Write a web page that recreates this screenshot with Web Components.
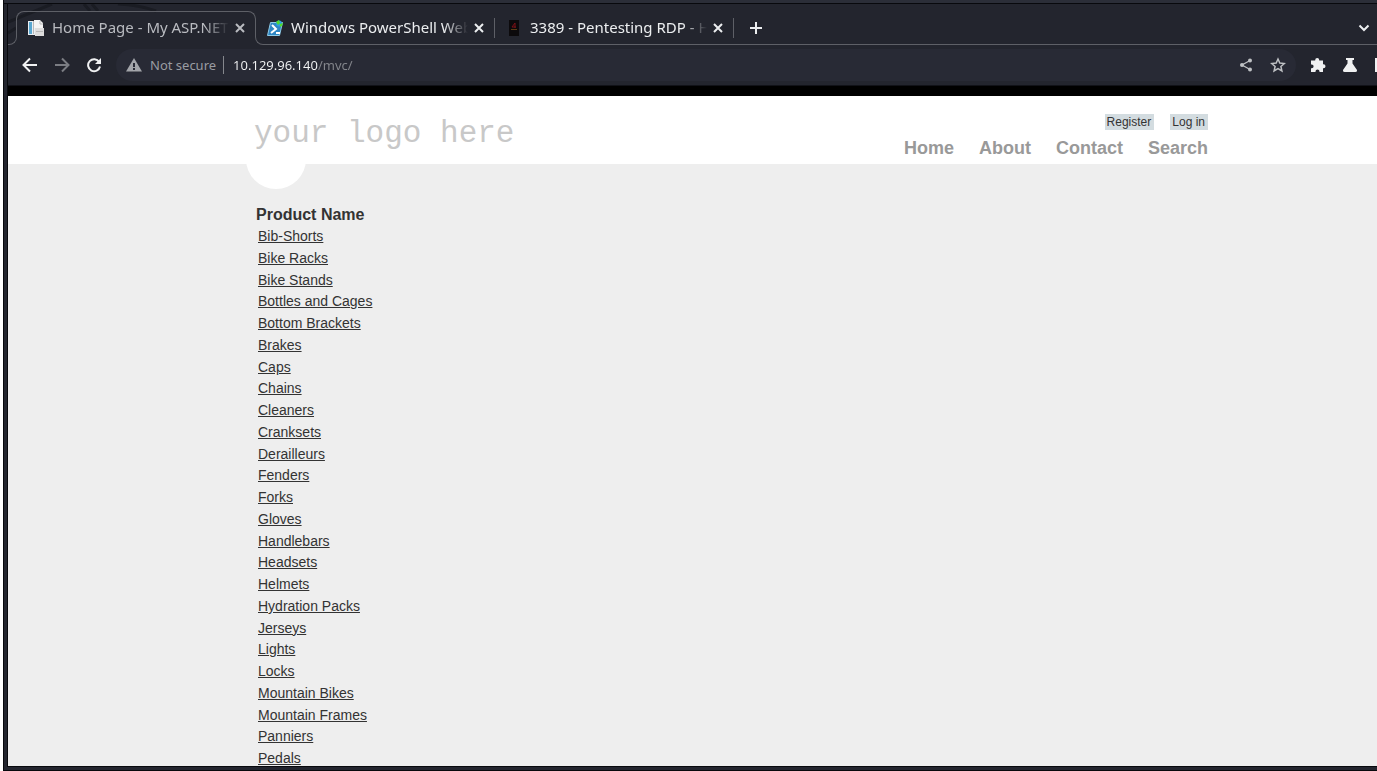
<!DOCTYPE html>
<html lang="en">
<head>
<meta charset="utf-8">
<title>Home Page - My ASP.NET MVC Application</title>
<style>
html, body { margin: 0; height: 100%; overflow: hidden; background: #fff; }
body { font-family: "Liberation Sans", sans-serif; }
</style>
</head>
<body>
<browser-window>
  <tab-strip slot="tabs">
    <browser-tab active label="Home Page - My ASP.NET">
      <svg slot="icon" viewBox="0 0 16 16" width="16" height="16"><path fill="#e9eef2" d="M0 1h8l2 2v12H0z"/><path fill="#58a6cf" d="M1 2h3v12H1z"/><path fill="#f4f4f4" d="M6 0h6l3 3v5H6z"/><path fill="#dcdcdc" d="M7 8h9v8H7z"/><path stroke="#b7b7b7" d="M5.500 1v13M12 1v3h3M8 11.500h7" fill="none"/></svg>
    </browser-tab>
    <browser-tab follows label="Windows PowerShell Web">
      <svg slot="icon" viewBox="0 0 16 16" width="16" height="16"><path fill="#2e86c4" stroke="#8ecbe8" d="M3.500 2.500h12l-3 13H.5z"/><path d="M5 5l4 4-5 4M9 13h4" stroke="#fff" stroke-width="2" fill="none"/><circle cx="12" cy="3.500" r="3" fill="#2f9fe0"/><path fill="#4fdc2b" d="M9 2l3-2 1 3-2 2zM13 4l3-1-1 3-2 1z"/></svg>
    </browser-tab>
    <browser-tab label="3389 - Pentesting RDP - H">
      <svg slot="icon" viewBox="0 0 16 16" width="16" height="16"><path fill="#0c0a0c" d="M3 0h10v16H3z"/><path d="M9 3L6 7h4M9 3v5" stroke="#7c1016" fill="none"/><path d="M5 9.500h6" stroke="#5c3b15"/></svg>
    </browser-tab>
  </tab-strip>
  <address-bar slot="toolbar"></address-bar>
  <site-page slot="page"></site-page>
</browser-window>
<script>
class ShadowElement extends HTMLElement {
  constructor() {
    super();
    this.attachShadow({ mode: "open" }).innerHTML = `<style>* { box-sizing: border-box; }
      button { display: grid; place-items: center; margin: 0; padding: 0; border: 0; background: none; color: inherit; font: inherit; }
      svg { display: block; }</style>` + this.render();
  }
}

customElements.define("browser-window", class extends ShadowElement {
  render() {
    return `<style>
      :host { display: flex; flex-direction: column; height: 100vh; margin-left: 3px; overflow: hidden;
        background: #23252e; border-left: 1px solid #08090d; border-bottom: 1px solid #08090d; box-sizing: border-box; padding: 0 0 3px 3px; }
      .title { height: 4px; flex: none; background: #2b2e38; border-bottom: 1px solid #08090d; margin-left: -3px; }
      .inner { flex: 1; min-height: 0; display: flex; flex-direction: column; border-left: 1px solid #08090d; border-bottom: 1px solid #08090d; }
      .view { flex: 1; min-height: 0; overflow: hidden; }
    </style>
    <div class="title"></div>
    <div class="inner"><slot name="tabs"></slot><slot name="toolbar"></slot><main class="view"><slot name="page"></slot></main></div>`;
  }
});

customElements.define("tab-strip", class extends ShadowElement {
  render() {
    return `<style>
      :host { display: flex; flex: none; position: relative; height: 41px; padding-top: 7px; color: #eceef0; box-sizing: border-box; }
      .lead { width: 9px; height: 9px; margin-right: -1px; align-self: flex-end; flex: none;
        border: solid #5e6067; border-width: 0 1px 1px 0; border-bottom-right-radius: 8px; }
      .rest { flex: 1; display: flex; justify-content: space-between; align-items: center; border-bottom: 1px solid #5e6067; padding: 0 5px 0 14px; }
      .wall { position: absolute; left: 0; top: 0; }
      button { width: 16px; height: 16px; }
    </style>
    <svg class="wall" width="160" height="40" viewBox="0 0 160 40" aria-hidden="true"><g stroke="#1a1c23" fill="none"><path d="M0 18L44 0M0 29L8 24M76 0l6 7M84 0l6 7M110 0q22 1 38 7" stroke-width="3"/></g></svg>
    <div class="lead"></div><slot></slot>
    <div class="rest">
      <button aria-label="New tab"><svg width="14" height="14" viewBox="0 0 14 14"><path d="M7 1v12M1 7h12" stroke="currentColor" stroke-width="2"/></svg></button>
      <button aria-label="Search tabs"><svg width="12" height="8" viewBox="0 0 12 8"><path d="M1.500 1.500L6 6l4.500-4.500" fill="none" stroke="currentColor" stroke-width="2"/></svg></button>
    </div>`;
  }
});

customElements.define("browser-tab", class extends ShadowElement {
  render() {
    return `<style>
      :host { display: flex; flex: none; align-items: center; width: 239px; box-sizing: border-box; padding: 0 10px 1px 11px;
        font: 15px/20px "Noto Sans", sans-serif; position: relative;
        background: linear-gradient(#5e6067, #5e6067) 0 100% / 100% 1px no-repeat; }
      :host([follows]) { background-position: 8px 100%; }
      :host([active]) { width: 240px; padding-left: 12px; background: none; color: #b9bbc0; }
      :host([active])::before { content: ""; position: absolute; inset: 0 0 8px; border: 1px solid #5e6067; border-bottom: 0; border-radius: 8px 8px 0 0; }
      :host([follows])::before { content: ""; position: absolute; left: -1px; bottom: 0; width: 9px; height: 9px; box-sizing: border-box;
        border: solid #5e6067; border-width: 0 0 1px 1px; border-bottom-left-radius: 8px; }
      :host(:not([active]))::after { content: ""; position: absolute; right: 0; top: 7px; height: 20px; border-right: 1px solid #5e6067; }
      .label { flex: 1; min-width: 0; margin-left: 8px; padding-bottom: 1px; white-space: nowrap; overflow: hidden;
        -webkit-mask-image: linear-gradient(to left, transparent 4px, #000 28px); mask-image: linear-gradient(to left, transparent 4px, #000 28px); }
      button { width: 12px; height: 16px; margin-left: 1px; }
    </style>
    <slot name="icon"></slot><span class="label"></span>
    <button aria-label="Close tab"><svg width="10" height="10" viewBox="0 0 10 10"><path d="M1 1l8 8M9 1L1 9" stroke="currentColor" stroke-width="2"/></svg></button>`;
  }
  connectedCallback() { this.shadowRoot.querySelector(".label").textContent = this.getAttribute("label"); }
});

customElements.define("address-bar", class extends ShadowElement {
  render() {
    return `<style>
      :host { display: flex; flex: none; align-items: center; height: 41px; padding-left: 14px; overflow: hidden; border-bottom: 1px solid #111218;
        box-sizing: border-box; color: #f0f1f2; font: 13px/18px "Noto Sans", sans-serif; }
      .nav, .tools { display: flex; gap: 16px; flex: none; }
      .nav button, .tools button, .box button { width: 16px; height: 16px; flex: none; }
      .tools { margin: 0 -13px 0 14px; }
      .box { flex: 1; min-width: 0; height: 32px; margin-left: 14px; padding: 0 10px; border-radius: 16px; background: #282a35; display: flex; align-items: center; color: #9a9ca2; }
      label { margin: 0 7px 0 8px; white-space: nowrap; }
      input { flex: 1; min-width: 0; height: 18px; margin: 0; padding: 0 0 0 9px; border: 0; border-left: 1px solid #85878d; outline: 0; font: inherit; color: #9a9ca2;
        background: linear-gradient(90deg, #f4f5f6 94px, #85878d 94px); -webkit-background-clip: text; background-clip: text; -webkit-text-fill-color: transparent; }
      .box .end { display: flex; gap: 16px; color: #bfc1c4; }
    </style>
    <div class="nav">
      <button aria-label="Back"><svg width="16" height="16" viewBox="0 0 16 16"><path d="M15 8H2M8 1.500L1.500 8 8 14.500" fill="none" stroke="currentColor" stroke-width="2"/></svg></button>
      <button aria-label="Forward" style="color:#7b7d83"><svg width="16" height="16" viewBox="0 0 16 16"><path d="M1 8h13M8 1.500L14.500 8 8 14.500" fill="none" stroke="currentColor" stroke-width="2"/></svg></button>
      <button aria-label="Reload"><svg width="16" height="16" viewBox="0 0 16 16"><path d="M13.200 5A6 6 0 1 0 14 9.500" fill="none" stroke="currentColor" stroke-width="2"/><path d="M15 1v6H9z" fill="currentColor"/></svg></button>
    </div>
    <div class="box">
      <svg width="16" height="16" viewBox="0 0 16 16"><path fill="#a3a5aa" d="M8 1l8 13.500H0z"/><path stroke="#282a35" stroke-width="2" d="M8 6v4M8 11v2"/></svg>
      <label for="url">Not secure</label><input id="url" type="text" value="10.129.96.140/mvc/" spellcheck="false">
      <div class="end">
        <button aria-label="Share"><svg width="16" height="16" viewBox="0 0 16 16" fill="currentColor"><path d="M12 3.500L4 8l8 4.500" fill="none" stroke="currentColor" stroke-width="1.300"/><circle cx="12" cy="3.500" r="2"/><circle cx="4" cy="8" r="2"/><circle cx="12" cy="12.500" r="2"/></svg></button>
        <button aria-label="Bookmark"><svg width="16" height="16" viewBox="0 0 16 16"><path d="M8 2l1.800 4.100 4.500.4-3.400 3 1 4.400L8 11.600l-3.900 2.300 1-4.400-3.400-3 4.500-.4z" fill="none" stroke="currentColor" stroke-width="1.500"/></svg></button>
      </div>
    </div>
    <div class="tools">
      <button aria-label="Extensions"><svg width="16" height="16" viewBox="0 0 16 16" fill="currentColor"><path d="M1 3.500h4.200V3a2 2 0 0 1 4 0v.5H13v3.700h.5a2 2 0 0 1 0 4H13V15H9.500v-.6a2 2 0 0 0-4 0v.6H1v-3.800h.7a1.900 1.900 0 0 0 0-3.800H1z"/></svg></button>
      <button aria-label="Labs"><svg width="16" height="16" viewBox="0 0 16 16" fill="currentColor"><path d="M4 1h8v2h-1.500v3.500L15 13q.5 2-1.500 2h-11Q.5 15 1 13l4.500-6.500V3H4z"/></svg></button>
      <button aria-label="Side panel"><svg width="16" height="16" viewBox="0 0 16 16" fill="currentColor"><path d="M1 1h14v14H1z"/></svg></button>
    </div>`;
  }
});

customElements.define("site-page", class extends ShadowElement {
  render() {
    return `<style>
      /* The browser window runs past the right edge of the screen. */
      :host { display: block; margin-right: -71px; min-height: 100%; background: #eee; border-top: 10px solid #000; color: #333; }
      header { background: #fff; }
      .wrap { max-width: 960px; margin: 0 auto; position: relative; }
      .bar { display: flex; justify-content: space-between; height: 68px; }
      .bar::after { content: ""; position: absolute; left: -2px; bottom: -25px; width: 60px; height: 60px; border-radius: 50%; background: #fff; }
      a { color: inherit; }
      .logo { position: relative; z-index: 1; margin: 20px 0 0 6px; font: 31px/36px "Liberation Mono", monospace; color: #c8c8c8; text-decoration: none; white-space: nowrap; }
      .side { display: flex; flex-direction: column; align-items: flex-end; padding-top: 18px; }
      .account { display: flex; gap: 16px; font-size: 12px; line-height: 16px; }
      .account a { background: #d3dce0; padding: 0 3px 0 2px; text-decoration: none; }
      nav { display: flex; gap: 25px; margin-top: 8px; font-size: 18px; line-height: 20px; font-weight: 600; color: #999; }
      nav a { text-decoration: none; }
      h3 { margin: 0; padding: 40px 0 0 8px; font-size: 16px; line-height: 22px; }
      ul { display: grid; grid-auto-rows: 1fr; min-height: 544px; margin: 0; padding: 0 0 0 10px; list-style: none; font-size: 14px; line-height: 21px; }
    </style>
    <header><div class="wrap bar">
      <a class="logo" href="#">your logo here</a>
      <div class="side">
        <div class="account"><a href="#register">Register</a><a href="#login">Log in</a></div>
        <nav><a href="#home">Home</a><a href="#about">About</a><a href="#contact">Contact</a><a href="#search">Search</a></nav>
      </div>
    </div></header>
    <section class="wrap"><h3>Product Name</h3><ul>${
      ["Bib-Shorts", "Bike Racks", "Bike Stands", "Bottles and Cages", "Bottom Brackets", "Brakes", "Caps", "Chains", "Cleaners", "Cranksets", "Derailleurs", "Fenders", "Forks", "Gloves", "Handlebars", "Headsets", "Helmets", "Hydration Packs", "Jerseys", "Lights", "Locks", "Mountain Bikes", "Mountain Frames", "Panniers", "Pedals"]
        .map(name => `<li><a href="#product">${name}</a></li>`).join("")
    }</ul></section>`;
  }
});
</script>
</body>
</html>
